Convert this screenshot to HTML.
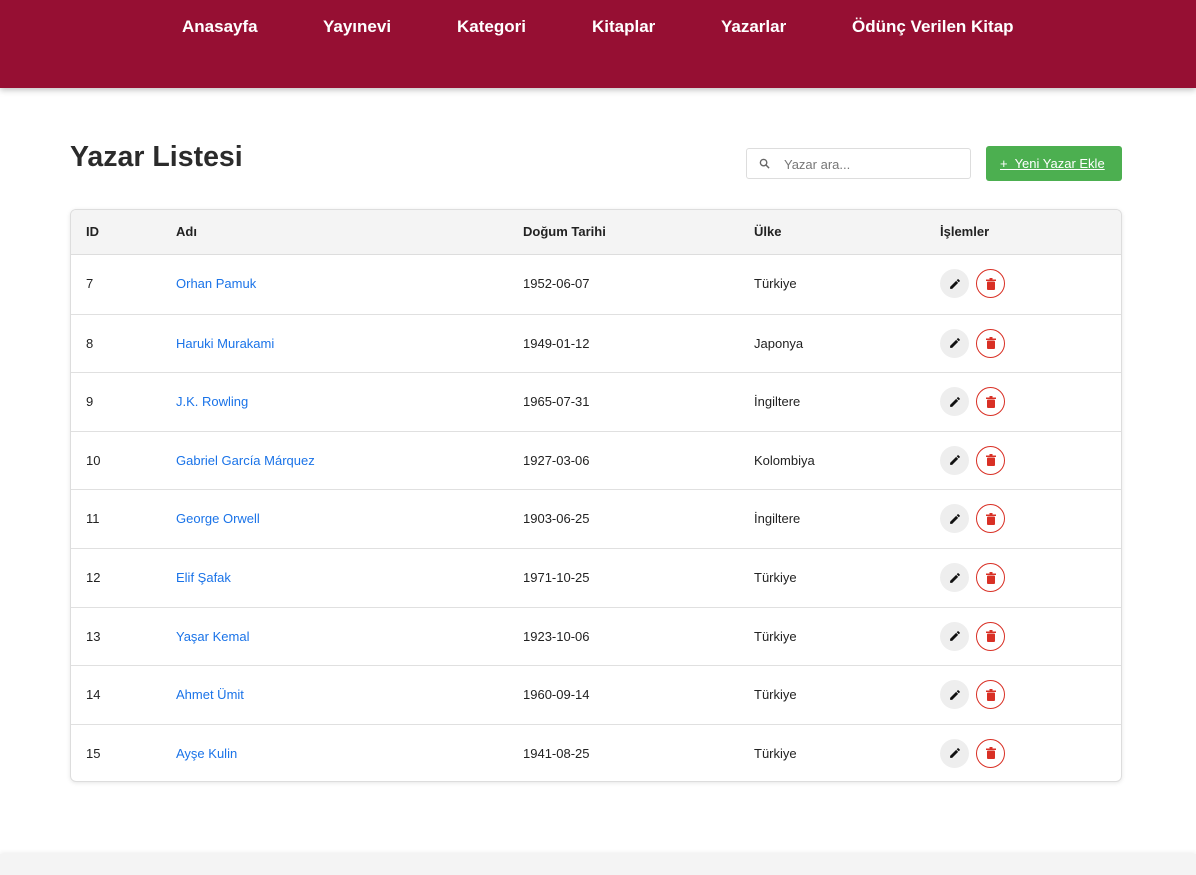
<!DOCTYPE html>
<html><head><meta charset="utf-8"><style>
*{box-sizing:border-box;margin:0;padding:0}
body{width:1196px;height:875px;overflow:hidden;background:#fff;font-family:"Liberation Sans",Arial,sans-serif;color:#222;position:relative}
.hdr{height:88px;background:#960f33;box-shadow:0 2px 6px rgba(0,0,0,.25);position:relative}
.hdr a{position:absolute;top:17px;color:#fff;font-weight:bold;font-size:17px;text-decoration:none}
h1{position:absolute;left:70px;top:141px;font-size:28.5px;font-weight:bold;color:#2b2b2b}
.search{position:absolute;left:746px;top:148px;width:225px;height:31px;border:1px solid #ddd;border-radius:3px;font-size:13px;color:#777;padding:8px 0 0 37px}
.search svg{position:absolute;left:12px;top:9px}
.btn{position:absolute;left:986px;top:146px;width:136px;height:35px;background:#4caf50;border-radius:3px;color:#fff;font-size:13px;padding:10px 0 0 14px;text-decoration:underline}
.tbl{position:absolute;left:70px;top:209px;width:1052px;height:573px;border:1px solid #ddd;border-radius:6px;box-shadow:0 1px 4px rgba(0,0,0,.1);overflow:hidden}
.row{position:absolute;left:0;width:1050px;height:58.6px;border-top:1px solid #e0e0e0;font-size:13px}
.row span{position:absolute;top:21px}
.th{top:0;height:45px;background:#f4f4f4;border-top:none;border-bottom:1px solid #ddd;font-weight:bold}
.th span{top:14px}
.c1{left:15px}.c2{left:105px}.c3{left:452px}.c4{left:683px}.c5{left:869px}
.n{color:#1a73e8}
.e,.d{position:absolute;top:14px;width:29px;height:29px;border-radius:50%}
.e{left:869px;background:#eee}
.d{left:905px;border:1px solid #d93025}
.e svg,.d svg{position:absolute;left:50%;top:50%;transform:translate(-50%,-50%)}
.foot{position:absolute;left:0;top:854px;width:1196px;height:21px;background:#f4f4f4;box-shadow:0 -2px 4px rgba(0,0,0,.06)}
</style></head><body>
<div class="hdr">
<a style="left:182px">Anasayfa</a><a style="left:323px">Yayınevi</a><a style="left:457px">Kategori</a><a style="left:592px">Kitaplar</a><a style="left:721px">Yazarlar</a><a style="left:852px">Ödünç Verilen Kitap</a>
</div>
<h1>Yazar Listesi</h1>
<div class="search"><svg width="11" height="11" viewBox="0 0 12 12"><circle cx="5" cy="5" r="3.5" fill="none" stroke="#666" stroke-width="1.5"/><path d="M7.5 7.5L11 11" stroke="#666" stroke-width="1.6"/></svg>Yazar ara...</div>
<div class="btn">+&nbsp; Yeni Yazar Ekle</div>
<div class="tbl">
<div class="row th"><span class="c1">ID</span><span class="c2">Adı</span><span class="c3">Doğum Tarihi</span><span class="c4">Ülke</span><span class="c5">İşlemler</span></div>
</div>
<script>
const d=[["7","Orhan Pamuk","1952-06-07","Türkiye"],["8","Haruki Murakami","1949-01-12","Japonya"],["9","J.K. Rowling","1965-07-31","İngiltere"],["10","Gabriel García Márquez","1927-03-06","Kolombiya"],["11","George Orwell","1903-06-25","İngiltere"],["12","Elif Şafak","1971-10-25","Türkiye"],["13","Yaşar Kemal","1923-10-06","Türkiye"],["14","Ahmet Ümit","1960-09-14","Türkiye"],["15","Ayşe Kulin","1941-08-25","Türkiye"]];
const t=document.querySelector('.tbl');
d.forEach((r,i)=>{const e=document.createElement('div');e.className='row';e.style.top=(45+i*58.6)+'px';if(i==0)e.style.borderTop='none';
e.innerHTML=`<span class="c1">${r[0]}</span><span class="c2 n">${r[1]}</span><span class="c3">${r[2]}</span><span class="c4">${r[3]}</span><div class="e"><svg width="13" height="13" viewBox="0 0 24 24"><path d="M3 17.25V21h3.75L17.81 9.94l-3.75-3.75L3 17.25zM20.71 7.04a1 1 0 000-1.41l-2.34-2.34a1 1 0 00-1.41 0l-1.83 1.83 3.75 3.75 1.83-1.83z" fill="#111"/></svg></div><div class="d"><svg width="10" height="12" viewBox="0 0 10 12"><rect x="0" y="1.5" width="10" height="1.5" fill="#d93025"/><rect x="3.5" y="0" width="3" height="2" fill="#d93025"/><rect x="1" y="3.5" width="8" height="8.5" rx="1" fill="#d93025"/></svg></div>`;t.appendChild(e);});
</script>
<div class="foot"></div>
</body></html>
